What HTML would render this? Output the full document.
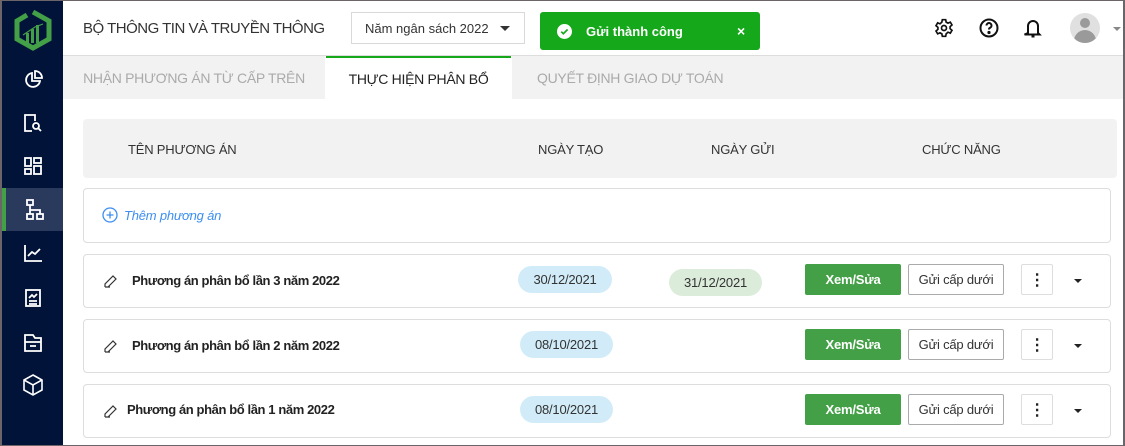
<!DOCTYPE html>
<html><head><meta charset="utf-8"><style>
*{box-sizing:border-box;margin:0;padding:0}
body{width:1125px;height:446px;overflow:hidden;background:#6b6468;font-family:"Liberation Sans",sans-serif;position:relative}
.frame{position:absolute;left:2px;top:1px;width:1121px;height:444px;background:#fff;overflow:hidden}
.side{position:absolute;left:0;top:0;width:61px;height:444px;background:#02133a}
.side .it{position:absolute;left:0;width:61px;height:43px;display:flex;align-items:center;justify-content:center}
.side .act{background:#2a3a5c;border-left:4px solid #43a047}
.ab{position:absolute}
.hdr-title{left:81px;top:19px;font-size:15px;color:#333;letter-spacing:-0.5px}
.sel{left:349px;top:11px;width:174px;height:32px;border:1px solid #d9d9d9;font-size:13px;color:#333;padding:8px 0 0 13px}
.toast{left:538px;top:11px;width:220px;height:38px;background:#16a81b;border-radius:3px;color:#fff;font-size:13px;font-weight:bold}
.tab{top:55px;height:43px;font-size:14px;display:flex;align-items:center;justify-content:center;letter-spacing:-0.3px}
.card{left:81px;width:1028px;background:#fff;border:1px solid #ddd;border-radius:4px}
.rn{font-size:13px;font-weight:bold;color:#222;letter-spacing:-0.4px}
.pill{height:27px;border-radius:14px;font-size:13px;color:#333;display:flex;align-items:center;justify-content:center;letter-spacing:-0.2px}
.bx{height:31px;font-size:13px;display:flex;align-items:center;justify-content:center;border-radius:2px;letter-spacing:-0.2px}
.th{font-size:13px;color:#333;letter-spacing:-0.2px}
</style></head><body><div class="frame">
<div class="side">
 <svg class="ab" style="left:11px;top:8px" width="40" height="42" viewBox="0 0 40 42"><path d="M20 3 L36 12 V30 L20 39 L4 30 V12 L14 6" fill="none" stroke="#43a047" stroke-width="5"/><rect x="13" y="24" width="3" height="10" fill="#43a047"/><rect x="18" y="20" width="3" height="14" fill="#43a047"/><rect x="23" y="16" width="3" height="18" fill="#43a047"/><path d="M10 26 L22 18 L30 15" stroke="#43a047" stroke-width="1.2" fill="none"/></svg>
 <div class="it" style="top:57px"><svg width="20" height="20" viewBox="0 0 20 20" fill="none" stroke="#fff" stroke-width="1.8"><path d="M9 3a7 7 0 1 0 8 8H9z"/><path d="M12 1v7h7a7 7 0 0 0-7-7z"/></svg></div>
 <div class="it" style="top:100px"><svg width="20" height="20" viewBox="0 0 20 20" fill="none" stroke="#fff" stroke-width="1.8"><path d="M9 18H2V2h10v6"/><circle cx="13" cy="13" r="3"/><path d="M15 15l3 3"/></svg></div>
 <div class="it" style="top:143px"><svg width="20" height="20" viewBox="0 0 20 20" fill="none" stroke="#fff" stroke-width="1.8"><rect x="2" y="2" width="6" height="8"/><rect x="11" y="2" width="7" height="5"/><rect x="2" y="13" width="6" height="5"/><rect x="11" y="10" width="7" height="8"/></svg></div>
 <div class="it act" style="top:187px"><svg width="20" height="22" viewBox="0 0 20 22" fill="none" stroke="#fff" stroke-width="1.8"><rect x="2" y="1" width="6" height="5"/><rect x="2" y="15" width="6" height="5"/><rect x="12" y="15" width="6" height="5"/><path d="M5 6v5h10v4M5 11v4"/></svg></div>
 <div class="it" style="top:230px"><svg width="20" height="20" viewBox="0 0 20 20" fill="none" stroke="#fff" stroke-width="1.8"><path d="M2 2v16h17"/><path d="M5 13l4-4 3 2 5-5"/></svg></div>
 <div class="it" style="top:275px"><svg width="18" height="20" viewBox="0 0 18 20" fill="none" stroke="#fff" stroke-width="1.8"><rect x="2" y="2" width="14" height="16"/><path d="M5 10l3-3 2 2 3-3M5 13h8M5 16h8"/></svg></div>
 <div class="it" style="top:320px"><svg width="20" height="20" viewBox="0 0 20 20" fill="none" stroke="#fff" stroke-width="1.8"><path d="M2 18V2h8l2 3h6v13z"/><path d="M2 9h16M7 13h6"/></svg></div>
 <div class="it" style="top:362px"><svg width="22" height="22" viewBox="0 0 22 22" fill="none" stroke="#fff" stroke-width="1.6"><path d="M11 1l9 5v10l-9 5-9-5V6z"/><path d="M2 6l9 5 9-5M11 11v10"/></svg></div>
</div>
<div class="ab hdr-title">BỘ THÔNG TIN VÀ TRUYỀN THÔNG</div>
<div class="ab sel">Năm ngân sách 2022<span style="position:absolute;right:14px;top:13px;border:5px solid transparent;border-top-color:#333;border-bottom:0"></span></div>
<div class="ab toast"><svg class="ab" style="left:17px;top:12px" width="15" height="15" viewBox="0 0 16 16"><circle cx="8" cy="8" r="8" fill="#fff"/><path d="M4.5 8.2l2.3 2.2 4.5-4.6" stroke="#16a81b" stroke-width="1.8" fill="none"/></svg><span class="ab" style="left:46px;top:12px">Gửi thành công</span><span class="ab" style="left:197px;top:11px;font-size:14px">×</span></div>
<svg class="ab" style="left:932px;top:17px" width="20" height="20" viewBox="0 0 24 24" fill="none" stroke="#111" stroke-width="2"><circle cx="12" cy="12" r="3"/><path d="M10 2h4l.6 3 2.2 1.2 2.8-1.2 2 3.4-2.3 2v2.4l2.3 2-2 3.4-2.8-1.2L14.6 19 14 22h-4l-.6-3-2.2-1.2-2.8 1.2-2-3.4 2.3-2v-2.4l-2.3-2 2-3.4 2.8 1.2L9.4 5z"/></svg>
<svg class="ab" style="left:977px;top:17px" width="20" height="20" viewBox="0 0 20 20" fill="none" stroke="#111" stroke-width="2"><circle cx="10" cy="10" r="8.5"/><path d="M7.5 7.5a2.5 2.5 0 1 1 3.5 2.3c-.8.4-1 .9-1 1.7" /><circle cx="10" cy="14.5" r=".6" fill="#111"/></svg>
<svg class="ab" style="left:1022px;top:17px" width="18" height="20" viewBox="0 0 18 20" fill="none" stroke="#111" stroke-width="2"><path d="M4 15V8a5 5 0 0 1 10 0v7l1.5 1.5h-15z"/><path d="M7.5 18.5h3"/></svg>
<div class="ab" style="left:1068px;top:12px;width:30px;height:30px;border-radius:50%;background:#e0e0e0;overflow:hidden"><div class="ab" style="left:10px;top:5px;width:10px;height:10px;border-radius:50%;background:#9a9a9a"></div><div class="ab" style="left:4px;top:17px;width:22px;height:16px;border-radius:11px 11px 0 0;background:#9a9a9a"></div></div>
<span class="ab" style="left:1111px;top:26px;border:4px solid transparent;border-top-color:#888;border-bottom:0"></span>
<div class="ab" style="left:61px;top:54px;width:1060px;height:1px;background:#ddd"></div>
<div class="ab tab" style="left:61px;width:262px;background:#f2f2f2;color:#aaa">NHẬN PHƯƠNG ÁN TỪ CẤP TRÊN</div>
<div class="ab tab" style="left:324px;width:185px;background:#fff;color:#222;border-top:2px solid #16a81b">THỰC HIỆN PHÂN BỔ</div>
<div class="ab tab" style="left:510px;width:611px;background:#f2f2f2;color:#aaa;justify-content:flex-start;padding-left:25px">QUYẾT ĐỊNH GIAO DỰ TOÁN</div>
<div class="ab" style="left:81px;top:118px;width:1034px;height:59px;background:#f2f2f2;border-radius:4px"></div>
<span class="ab th" style="left:126px;top:141px">TÊN PHƯƠNG ÁN</span>
<span class="ab th" style="left:536px;top:141px">NGÀY TẠO</span>
<span class="ab th" style="left:709px;top:141px">NGÀY GỬI</span>
<span class="ab th" style="left:920px;top:141px">CHỨC NĂNG</span>
<div class="ab card" style="top:187px;height:55px"></div>
<svg class="ab" style="left:100px;top:206px" width="16" height="16" viewBox="0 0 16 16" fill="none" stroke="#3d8ef0" stroke-width="1.3"><circle cx="8" cy="8" r="7"/><path d="M8 4.5v7M4.5 8h7"/></svg>
<span class="ab" style="left:122px;top:207px;font-size:13px;font-style:italic;color:#3d8ef0;letter-spacing:-0.2px">Thêm phương án</span>

<div class="ab card" style="top:253px;height:54px"></div>
<div class="ab card" style="top:318px;height:54px"></div>
<div class="ab card" style="top:383px;height:54px"></div>

<svg class="ab" style="left:102px;top:273px" width="14" height="14" viewBox="0 0 14 14" fill="none" stroke="#333" stroke-width="1.2"><path d="M1 13h5M1 13v-3l8-8 3 3-8 8"/></svg>
<span class="ab rn" style="left:130px;top:272px">Phương án phân bổ lần 3 năm 2022</span>
<div class="ab pill" style="left:516px;top:265px;width:94px;background:#d1ecf8">30/12/2021</div>
<div class="ab pill" style="left:667px;top:268px;width:93px;background:#dcecdb">31/12/2021</div>
<div class="ab bx" style="left:803px;top:263px;width:96px;background:#43a047;color:#fff;font-weight:bold">Xem/Sửa</div>
<div class="ab bx" style="left:906px;top:263px;width:96px;border:1px solid #aaa;color:#333">Gửi cấp dưới</div>
<div class="ab bx" style="left:1019px;top:263px;width:32px;border:1px solid #ddd;font-weight:bold;font-size:16px;color:#222">⋮</div>
<span class="ab" style="left:1072px;top:278px;border:4px solid transparent;border-top-color:#222;border-bottom:0"></span>

<svg class="ab" style="left:102px;top:338px" width="14" height="14" viewBox="0 0 14 14" fill="none" stroke="#333" stroke-width="1.2"><path d="M1 13h5M1 13v-3l8-8 3 3-8 8"/></svg>
<span class="ab rn" style="left:130px;top:337px">Phương án phân bổ lần 2 năm 2022</span>
<div class="ab pill" style="left:518px;top:330px;width:93px;background:#d1ecf8">08/10/2021</div>
<div class="ab bx" style="left:803px;top:328px;width:96px;background:#43a047;color:#fff;font-weight:bold">Xem/Sửa</div>
<div class="ab bx" style="left:906px;top:328px;width:96px;border:1px solid #aaa;color:#333">Gửi cấp dưới</div>
<div class="ab bx" style="left:1019px;top:328px;width:32px;border:1px solid #ddd;font-weight:bold;font-size:16px;color:#222">⋮</div>
<span class="ab" style="left:1072px;top:343px;border:4px solid transparent;border-top-color:#222;border-bottom:0"></span>

<svg class="ab" style="left:102px;top:403px" width="14" height="14" viewBox="0 0 14 14" fill="none" stroke="#333" stroke-width="1.2"><path d="M1 13h5M1 13v-3l8-8 3 3-8 8"/></svg>
<span class="ab rn" style="left:125px;top:401px">Phương án phân bổ lần 1 năm 2022</span>
<div class="ab pill" style="left:518px;top:395px;width:93px;background:#d1ecf8">08/10/2021</div>
<div class="ab bx" style="left:803px;top:393px;width:96px;background:#43a047;color:#fff;font-weight:bold">Xem/Sửa</div>
<div class="ab bx" style="left:906px;top:393px;width:96px;border:1px solid #aaa;color:#333">Gửi cấp dưới</div>
<div class="ab bx" style="left:1019px;top:393px;width:32px;border:1px solid #ddd;font-weight:bold;font-size:16px;color:#222">⋮</div>
<span class="ab" style="left:1072px;top:408px;border:4px solid transparent;border-top-color:#222;border-bottom:0"></span>
</div></body></html>
